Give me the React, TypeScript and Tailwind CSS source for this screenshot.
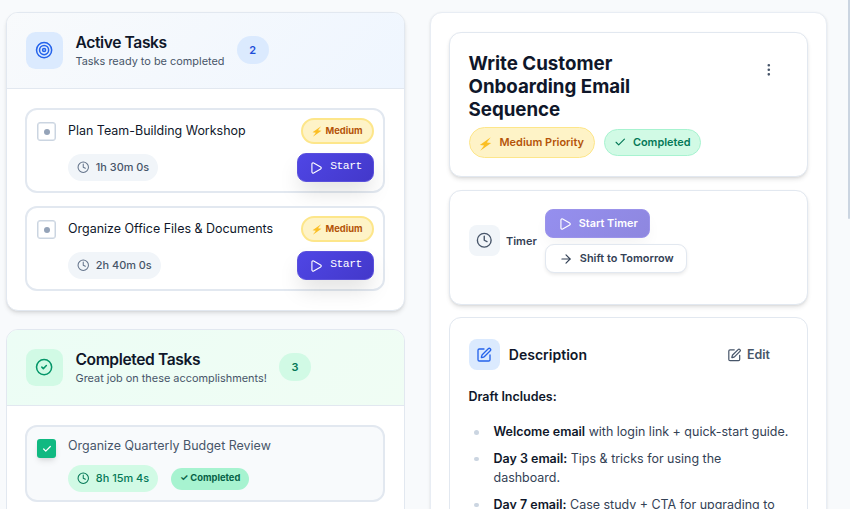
import React from "react";
import { ArrowRight, Check, Clock, EllipsisVertical, Play, SquarePen, Target } from "lucide-react";

type Tone = "blue" | "green";

function SectionHeader({ tone, title, subtitle, count }: { tone: Tone; title: string; subtitle: string; count: number }) {
  const blue = tone === "blue";
  return (
    <header
      className={`flex h-[76px] items-center border-b border-slate-200 px-[18.5px] ${
        blue ? "bg-linear-135 from-slate-50 to-blue-50" : "bg-linear-135 from-[#ecfdf5] to-[#f0fdf4]"
      }`}
    >
      <div className={`flex size-[37.5px] items-center justify-center rounded-[9.5px] ${blue ? "bg-[#dbeafe] text-[#2563eb]" : "bg-[#d1fae5] text-[#059669]"}`}>
        {blue ? <Target size={18.2} /> : <SmallCircleCheck />}
      </div>
      <div className="ml-[12.5px] pt-px">
        <h2 className="text-[15.6px] leading-[19.5px] font-semibold tracking-[-0.39px] text-[#0f172a]">{title}</h2>
        <p className="mt-px -mb-px text-[10.92px] leading-[17.5px] text-[#475569]">{subtitle}</p>
      </div>
      <span
        className={`-mt-px ml-[12px] flex h-[27.5px] w-8 items-center justify-center rounded-full text-[10.95px] font-semibold ${
          blue ? "bg-[#dbeafe] text-[#1d4ed8]" : "bg-[#d1fae5] text-[#047857]"
        }`}
      >
        {count}
      </span>
    </header>
  );
}

function SmallCircleCheck() {
  return (
    <svg viewBox="0 0 24 24" className="size-[18.2px]" fill="none" stroke="currentColor" strokeWidth={2} strokeLinecap="round" strokeLinejoin="round">
      <circle cx="12" cy="12" r="10" />
      <path d="m9 12 2 2 4-4" />
    </svg>
  );
}

function ActiveTask({ title, time }: { title: string; time: string }) {
  return (
    <article className="flex h-[85px] rounded-xl border-2 border-[#e2e8f0] bg-white pt-[8px] pr-[9px] pl-[10px]">
      <div className="mt-[4px] flex size-[19px] shrink-0 items-center justify-center rounded-[3px] border-[1.5px] border-[#cbd5e1] shadow-[inset_0_0_0_0.5px_#cbd5e1]">
        <span className="size-[6px] rounded-full bg-[#94a3b8]" />
      </div>
      <div className="ml-3 flex flex-col items-start">
        <h3 className="pt-[3px] text-[12.48px] leading-5 whitespace-nowrap text-[#0f172a]">{title}</h3>
        <span className="mt-[13px] flex h-[27px] items-center gap-[6px] rounded-full bg-[#f1f5f9] px-[9.3px] text-[10.92px] font-medium text-[#475569]">
          <Clock size={12.5} className="text-[#64748b]" />
          {time}
        </span>
      </div>
      <div className="ml-auto flex flex-col items-end">
        <span className="flex h-[26px] w-[73px] items-center justify-center gap-[3px] rounded-full border-2 border-[#fde68a] bg-[#fef3c7] text-[9.36px] font-bold text-[#b45309]">
          <Bolt className="h-[11px] w-[10px]" />
          Medium
        </span>
        <button className="mt-[9px] flex h-[29px] w-[77px] items-center justify-center gap-[7px] rounded-[9px] border border-[#5a50dc] bg-linear-135 from-[#4f46e5] to-[#4338ca] font-['Liberation_Mono',monospace] text-[11.4px] text-white shadow-[0_12px_22px_-3px_rgba(0,0,0,0.13)]">
          <Play size={14} strokeWidth={1.9} />
          <span className="-mt-px tracking-[-0.55px]">Start</span>
        </button>
      </div>
    </article>
  );
}

function Bolt({ className }: { className: string }) {
  return (
    <svg viewBox="0 0 14 16" className={className}>
      <path d="M13 0.3 0.5 9.1 5.4 9.7 1 15.8 13.5 6.9 8.5 6.3Z" fill="#fbbf24" />
    </svg>
  );
}

function Item({ lead, children }: { lead: string; children: React.ReactNode }) {
  return (
    <li className="mb-[7px] flex text-[12.48px] leading-[19.5px] text-[#334155]">
      <span className="mt-[8px] mr-[15px] ml-[5.5px] size-[4.5px] shrink-0 rounded-full bg-[#cbd5e1]" />
      <span>
        <strong className="font-semibold text-[#0f172a]">{lead}</strong> {children}
      </span>
    </li>
  );
}

const cardShadow = "shadow-[0_3px_5px_-1px_rgba(0,0,0,0.12),0_1px_3px_-1px_rgba(0,0,0,0.1)]";

export default function App() {
  return (
    <div className="relative flex h-[509px] w-[850px] items-start gap-[25px] overflow-hidden bg-[#f8fafc] pt-[12px] pl-[6px] font-[Inter,sans-serif]">
      <main className="flex w-[399px] shrink-0 flex-col gap-[18px]">
        <section className={`h-[299px] overflow-hidden rounded-xl border border-[#e2e8f0] bg-white ${cardShadow}`}>
          <SectionHeader tone="blue" title="Active Tasks" subtitle="Tasks ready to be completed" count={2} />
          <div className="flex flex-col gap-[13px] pt-[19px] pr-[19px] pl-[18px]">
            <ActiveTask title="Plan Team-Building Workshop" time="1h 30m 0s" />
            <ActiveTask title="Organize Office Files & Documents" time="2h 40m 0s" />
          </div>
        </section>
        <section className="h-[298px] overflow-hidden rounded-xl border border-[#e2e8f0] bg-white">
          <SectionHeader tone="green" title="Completed Tasks" subtitle="Great job on these accomplishments!" count={3} />
          <div className="pt-[19px] pr-[19px] pl-[18px]">
            <article className="flex h-[77px] rounded-xl border-2 border-[#e2e8f0] bg-[#f8fafc] pl-[10px]">
              <div className="mt-[12px] flex size-[19px] items-center justify-center rounded-[3px] bg-[#10b981] text-white shadow-md">
                <Check size={10} strokeWidth={3} />
              </div>
              <div className="ml-3">
                <h3 className="mt-[9px] text-[12.48px] leading-5 text-[#475569]">Organize Quarterly Budget Review</h3>
                <div className="mt-[9px] flex items-center gap-[12.5px]">
                  <span className="flex h-[27px] items-center gap-[6px] rounded-full bg-[#d1fae5] px-[9.3px] text-[10.92px] font-medium text-[#047857]">
                    <Clock size={12.5} />
                    8h 15m 4s
                  </span>
                  <span className="flex h-[22px] w-[78.5px] items-center justify-center rounded-full bg-[#a7f3d0] text-[9.36px] font-bold text-[#065f46]">✓ Completed</span>
                </div>
              </div>
            </article>
          </div>
        </section>
      </main>

      <aside className="h-[600px] w-[397px] shrink-0 rounded-xl border border-[#e8edf4] bg-white px-[18px] pt-[19px] shadow-sm">
        <section className={`h-[145px] rounded-xl border border-[#e2e8f0] bg-white px-[18.5px] pt-[19px] ${cardShadow}`}>
          <div className="flex items-start justify-between">
            <h1 className="w-[220px] text-[18.72px] leading-[23.2px] font-bold text-[#0f172a]">Write Customer Onboarding Email Sequence</h1>
            <EllipsisVertical size={15.6} className="mt-[10px] mr-[11.5px] text-[#475569]" strokeWidth={2} />
          </div>
          <div className="mt-[5.4px] flex items-center gap-[9.5px]">
            <span className="flex h-[31px] w-[126px] items-center justify-center gap-[7.5px] rounded-full border border-[#fde68a] bg-[#fef3c7] text-[10.95px] font-semibold text-[#b45309]">
              <Bolt className="mt-[3px] h-[14px] w-[13px]" />
              Medium Priority
            </span>
            <span className="flex h-[27px] w-[97px] items-center justify-center gap-[6px] rounded-full border border-[#a7f3d0] bg-[#d1fae5] text-[10.92px] font-semibold text-[#047857]">
              <Check size={12.5} strokeWidth={2.2} />
              Completed
            </span>
          </div>
        </section>

        <section className={`mt-[13px] flex h-[115px] rounded-xl border border-[#e2e8f0] bg-white px-[18.5px] ${cardShadow}`}>
          <div className="mt-[34px] flex size-[31px] items-center justify-center rounded-[8px] bg-[#f1f5f9] text-[#475569]">
            <Clock size={16.5} />
          </div>
          <span className="mt-[42px] ml-[6.5px] text-[10.95px] leading-4 font-semibold text-[#334155]">Timer</span>
          <div className="mt-[18px] ml-[8.5px] flex flex-col items-start gap-[6px]">
            <button className="flex h-[29px] w-[105px] items-center justify-center gap-[7px] rounded-[8px] border border-[#9b93ea] bg-linear-135 from-[#958fef] to-[#8e87df] text-[10.92px] font-semibold text-white shadow-[0_8px_16px_-3px_rgba(0,0,0,0.05)]">
              <Play size={14} strokeWidth={2} />
              Start Timer
            </button>
            <button className="flex h-[29px] w-[142px] items-center justify-center gap-[7px] rounded-[9px] border border-[#e2e8f0] bg-white text-[10.92px] font-semibold text-[#334155] shadow-[0_2px_4px_-1px_rgba(0,0,0,0.12)]">
              <ArrowRight size={14} />
              Shift to Tomorrow
            </button>
          </div>
        </section>

        <section className="mt-3 h-[300px] rounded-xl border border-[#e2e8f0] bg-white px-[18.5px] pt-[21px]">
          <div className="flex items-center">
            <div className="flex size-[31px] items-center justify-center rounded-[8px] bg-[#dbeafe] text-[#2563eb]">
              <SquarePen size={16} />
            </div>
            <h2 className="ml-[9.3px] text-[14.04px] leading-5 font-semibold text-[#0f172a]">Description</h2>
            <button className="mt-[2px] mr-[18.5px] ml-auto flex items-center gap-[6px] text-[12.48px] font-semibold text-[#475569]">
              <SquarePen size={14.5} className="-mt-px" />
              Edit
            </button>
          </div>
          <p className="mt-[17px] text-[12.48px] leading-5 font-semibold text-[#0f172a]">Draft Includes:</p>
          <ul className="mt-[15px] -mr-[14px]">
            <Item lead="Welcome email">with login link + quick-start guide.</Item>
            <Item lead="Day 3 email:">
              Tips &amp; tricks for using the
              <br />
              dashboard.
            </Item>
            <Item lead="Day 7 email:">Case study + CTA for upgrading to</Item>
          </ul>
        </section>
      </aside>
      <div className="absolute top-0 right-0 h-[219px] w-[2px] rounded-b-full bg-[#cbd5e1]" />
    </div>
  );
}
